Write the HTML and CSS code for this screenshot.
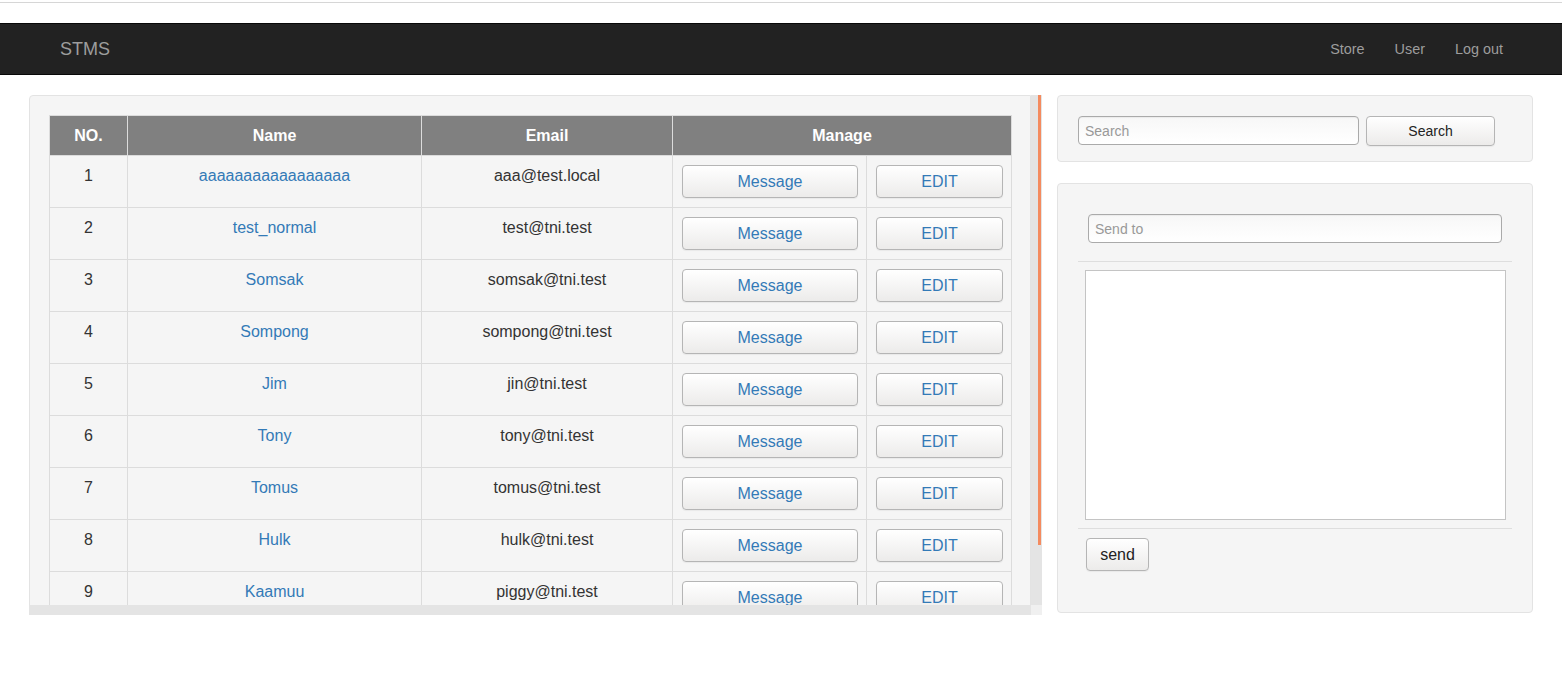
FILE: index.html
```html
<!DOCTYPE html>
<html>
<head>
<meta charset="utf-8">
<title>STMS</title>
<link rel="stylesheet" href="styles.css">
</head>
<body>
<div class="topline"></div>
<nav class="navbar">
  <a class="brand" href="#">STMS</a>
  <ul class="nav-links">
    <li><a href="#">Store</a></li>
    <li><a href="#">User</a></li>
    <li><a href="#">Log out</a></li>
  </ul>
</nav>
<main class="main">
  <section class="table-panel">
    <div class="viewport">
      <div class="well table-well">
        <table class="users">
          <colgroup>
            <col class="c-no"><col class="c-name"><col class="c-email"><col class="c-msg"><col class="c-edit">
          </colgroup>
          <thead>
            <tr><th>NO.</th><th>Name</th><th>Email</th><th colspan="2">Manage</th></tr>
          </thead>
          <tbody>
            <tr><td>1</td><td><a href="#">aaaaaaaaaaaaaaaaa</a></td><td>aaa@test.local</td><td class="act"><a class="btn" href="#">Message</a></td><td class="act"><a class="btn" href="#">EDIT</a></td></tr>
            <tr><td>2</td><td><a href="#">test_normal</a></td><td>test@tni.test</td><td class="act"><a class="btn" href="#">Message</a></td><td class="act"><a class="btn" href="#">EDIT</a></td></tr>
            <tr><td>3</td><td><a href="#">Somsak</a></td><td>somsak@tni.test</td><td class="act"><a class="btn" href="#">Message</a></td><td class="act"><a class="btn" href="#">EDIT</a></td></tr>
            <tr><td>4</td><td><a href="#">Sompong</a></td><td>sompong@tni.test</td><td class="act"><a class="btn" href="#">Message</a></td><td class="act"><a class="btn" href="#">EDIT</a></td></tr>
            <tr><td>5</td><td><a href="#">Jim</a></td><td>jin@tni.test</td><td class="act"><a class="btn" href="#">Message</a></td><td class="act"><a class="btn" href="#">EDIT</a></td></tr>
            <tr><td>6</td><td><a href="#">Tony</a></td><td>tony@tni.test</td><td class="act"><a class="btn" href="#">Message</a></td><td class="act"><a class="btn" href="#">EDIT</a></td></tr>
            <tr><td>7</td><td><a href="#">Tomus</a></td><td>tomus@tni.test</td><td class="act"><a class="btn" href="#">Message</a></td><td class="act"><a class="btn" href="#">EDIT</a></td></tr>
            <tr><td>8</td><td><a href="#">Hulk</a></td><td>hulk@tni.test</td><td class="act"><a class="btn" href="#">Message</a></td><td class="act"><a class="btn" href="#">EDIT</a></td></tr>
            <tr><td>9</td><td><a href="#">Kaamuu</a></td><td>piggy@tni.test</td><td class="act"><a class="btn" href="#">Message</a></td><td class="act"><a class="btn" href="#">EDIT</a></td></tr>
          </tbody>
        </table>
      </div>
    </div>
    <div class="vbar"><div class="vthumb"></div></div>
    <div class="hbar"></div>
    <div class="corner"></div>
  </section>
  <aside class="side">
    <div class="well search-well">
      <input class="input search-input" type="text" placeholder="Search">
      <button class="btn btn-dark search-btn" type="button">Search</button>
    </div>
    <div class="well msg-well">
      <div class="to-group">
        <input class="input to-input" type="text" placeholder="Send to">
      </div>
      <hr class="sep">
      <textarea class="body-text"></textarea>
      <hr class="sep sep2">
      <button class="btn btn-dark send-btn" type="button">send</button>
    </div>
  </aside>
</main>
</body>
</html>
```

FILE: styles.css
```css
* { box-sizing: border-box; }

html, body {
  margin: 0;
  padding: 0;
  background: #fff;
  font-family: "Liberation Sans", Arial, Helvetica, sans-serif;
  font-size: 16px;
  color: #333;
}

a { color: #337ab7; text-decoration: none; }

.topline {
  height: 3px;
  border-bottom: 1px solid #d6d6d6;
  margin-bottom: 20px;
}

.navbar {
  height: 52px;
  background: #222;
  border-top: 1px solid #080808;
  border-bottom: 1px solid #080808;
  display: flex;
  align-items: center;
  justify-content: space-between;
  padding: 0 44px 0 45px;
}

.brand {
  color: #9d9d9d;
  font-size: 18px;
  padding: 0 15px;
  line-height: 50px;
}

.nav-links {
  list-style: none;
  margin: 0;
  padding: 0;
  display: flex;
}

.nav-links a {
  display: block;
  color: #9d9d9d;
  font-size: 14.4px;
  padding: 0 15px;
  line-height: 50px;
}

.main {
  display: flex;
  align-items: flex-start;
  gap: 15px;
  padding: 20px 29px 0 29px;
}

.well {
  background: #f5f5f5;
  border: 1px solid #e3e3e3;
  border-radius: 4px;
}

.table-panel {
  width: 1013px;
  height: 520px;
  flex: none;
  display: grid;
  grid-template-columns: 1002px 11px;
  grid-template-rows: 510px 10px;
}

.viewport {
  overflow: hidden;
}

.vbar {
  background: #e4e4e4;
  display: flex;
  justify-content: flex-end;
  padding-right: 1px;
}

.vthumb {
  width: 3px;
  height: 450px;
  background: #f48b5f;
}

.hbar { background: #e4e4e4; }
.corner { background: #f0f0f0; }

.table-well {
  padding: 19px;
  border-bottom-left-radius: 0;
  border-bottom-right-radius: 0;
  border-top-right-radius: 0;
}

.users {
  width: 962px;
  border-collapse: collapse;
  table-layout: fixed;
  margin-bottom: 29px;
}

.c-no { width: 78px; }
.c-name { width: 294px; }
.c-email { width: 251px; }
.c-msg { width: 194px; }
.c-edit { width: 145px; }

.users th {
  background: #808080;
  color: #fff;
  font-weight: bold;
  height: 40px;
  padding: 0 8px;
  border: 1px solid #dcdcdc;
  text-align: center;
}

.users td {
  border: 1px solid #dcdcdc;
  text-align: center;
  vertical-align: top;
  padding: 9px 10px;
  height: 52px;
  line-height: 22px;
}

.users td.act { padding: 9px 8px 9px 9px; }

.btn {
  display: block;
  height: 33px;
  line-height: 31px;
  border: 1px solid #b5b5b5;
  border-radius: 4px;
  background: linear-gradient(#ffffff, #ecebea);
  color: #337ab7;
  text-align: center;
  font-family: inherit;
  font-size: 16px;
  box-shadow: 0 1px 1px rgba(0,0,0,.05);
}

.btn-dark { color: #222; cursor: pointer; }

.side {
  width: 476px;
  flex: none;
  display: flex;
  flex-direction: column;
  gap: 21px;
}

.search-well {
  height: 67px;
  padding: 20px 20px;
  display: flex;
  gap: 7px;
}

.input {
  height: 29px;
  border: 1px solid #aaa;
  border-radius: 4px;
  background: linear-gradient(#f7f7f7, #ffffff);
  font-family: inherit;
  font-size: 14px;
  padding: 0 6px;
  color: #333;
  box-shadow: inset 0 1px 1px rgba(0,0,0,.05);
}
.input::placeholder { color: #999; }

.search-input { width: 281px; }

.search-btn {
  width: 129px;
  height: 30px;
  line-height: 28px;
  padding: 0;
  font-size: 14px;
}

.msg-well {
  height: 430px;
  padding: 20px 20px;
}

.to-group { padding: 10px 10px 0 10px; }

.to-input { display: block; width: 100%; }

.sep {
  border: 0;
  border-top: 1px solid #dedede;
  margin: 18px 0 8px 0;
}

.body-text {
  display: block;
  width: 421px;
  height: 250px;
  margin: 0 0 0 7px;
  border: 1px solid #c4c4c4;
  background: #fff;
  resize: none;
  font-family: inherit;
}

.sep2 { margin-top: 8px; margin-bottom: 9px; }

.send-btn {
  width: 63px;
  height: 33px;
  padding: 0;
  margin-left: 8px;
  line-height: 31px;
}
```
